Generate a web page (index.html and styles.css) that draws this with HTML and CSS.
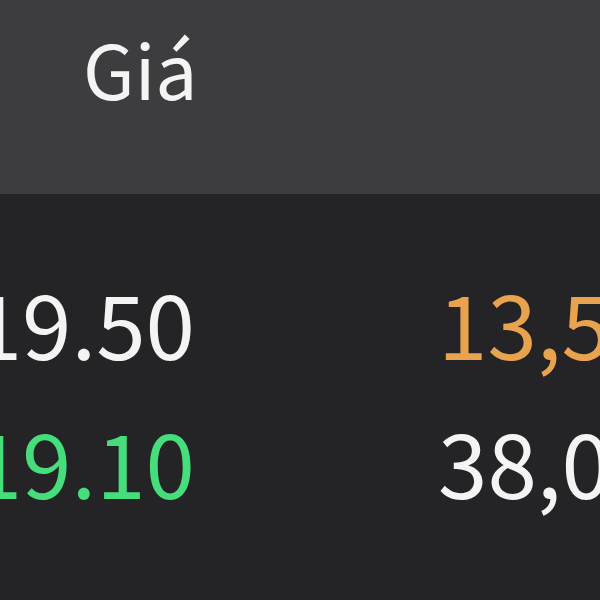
FILE: index.html
```html
<!DOCTYPE html>
<html lang="vi">
<head>
<meta charset="utf-8">
<link rel="stylesheet" href="styles.css">
</head>
<body>
<div class="screen">
  <div class="head">
    <span class="head-title">Giá</span>
  </div>
  <div class="rows">
    <div class="row">
      <div class="cell price"><span>19.50</span></div>
      <div class="cell vol orange"><span>13,500</span></div>
    </div>
    <div class="row">
      <div class="cell price green"><span>19.10</span></div>
      <div class="cell vol"><span>38,000</span></div>
    </div>
  </div>
</div>
</body>
</html>
```
FILE: styles.css
```css
html, body {
  margin: 0;
  padding: 0;
  background: #242427;
  overflow: hidden;
}
.screen {
  width: 600px;
  height: 600px;
  overflow: hidden;
  font-family: "Noto Sans CJK SC", "Noto Sans", sans-serif;
  color: #f4f4f4;
  background: #242427;
}
.head {
  height: 194px;
  background: #3d3d40;
  display: flex;
  align-items: flex-start;
  padding-left: 83px;
  box-sizing: border-box;
  padding-top: 18px;
}
.head-title {
  font-size: 75px;
  line-height: 100px;
}
.rows {
  display: flex;
  flex-direction: column;
  padding-top: 68px;
  gap: 19px;
}
.row {
  display: grid;
  grid-template-columns: 195px 1fr;
  column-gap: 243px;
  height: 120px;
  align-items: center;
}
.cell {
  display: flex;
  font-size: 89px;
  line-height: 120px;
  white-space: nowrap;
}
.price {
  justify-content: flex-end;
}
.vol {
  justify-content: flex-start;
}
.green { color: #46dd7c; }
.orange { color: #e9a24e; }
```
